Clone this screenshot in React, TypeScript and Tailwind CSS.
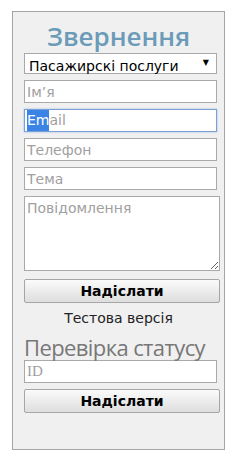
import { useState } from 'react';

const field =
  'block w-[193px] h-[23px] border border-[#a9a9a9] bg-white px-[2px] text-[14px] text-[#222] outline-none placeholder:text-[#a0a0a0]';

const button =
  'block h-[24px] w-[196px] rounded-[2px] border border-[#a6a6a6] bg-gradient-to-b from-[#fbfbfb] to-[#dedede] text-[14px] font-bold text-black';

export default function App() {
  const [topic, setTopic] = useState('Пасажирскі послуги');

  return (
    <div className="min-h-[460px] w-[241px] bg-white pt-[11px] pl-[12px] font-['DejaVu_Sans',Verdana,sans-serif]">
      <div className="w-[213px] h-[439px] border border-[#a5a5a5] bg-[#f0f0f0] pl-[11px]">
        <h1 className="mt-[8px] h-[33px] text-center pr-[11px] font-['Open_Sans',sans-serif] text-[26px] leading-[33px] font-semibold text-[#6b9bb9]">
          Звернення
        </h1>

        <div className="relative h-[21px] w-[193px] border border-[#a9a9a9] bg-white">
          <select
            value={topic}
            onChange={(e) => setTopic(e.target.value)}
            className="h-full w-full appearance-none bg-transparent pl-[4px] text-[14px] leading-[19px] text-black outline-none"
          >
            <option>Пасажирскі послуги</option>
          </select>
          <span className="pointer-events-none absolute right-[7px] top-[4px] text-[8px] leading-[10px] text-black">▼</span>
        </div>

        <input className={field + ' mt-[6px]'} placeholder="Ім’я" />

        <div className="mt-[6px] flex h-[23px] w-[193px] items-center border border-[#7c9fd6] bg-white px-[2px] text-[14px] shadow-[0_0_2px_#9bb8e6]">
          <span className="bg-[#3a84e6] text-white">Em</span>
          <span className="text-[#a0a0a0]">ail</span>
        </div>

        <input className={field + ' mt-[6px]'} placeholder="Телефон" />
        <input className={field + ' mt-[6px]'} placeholder="Тема" />

        <textarea
          className="mt-[6px] block h-[75px] w-[196px] border border-[#a9a9a9] bg-white px-[2px] py-[1px] text-[14px] outline-none placeholder:text-[#a0a0a0]"
          placeholder="Повідомлення"
        />

        <button className={button + ' mt-[8px]'}>Надіслати</button>

        <p className="mt-[6px] pr-[11px] text-center text-[14px] leading-[18px] text-[#222]">Тестова версія</p>

        <h2 className="mt-[8px] h-[24px] font-['Open_Sans',sans-serif] text-[22px] leading-[24px] text-[#777] tracking-[-0.6px]">
          Перевірка статусу
        </h2>

        <input
          className="mt-[1px] block h-[23px] w-[193px] border border-[#a9a9a9] bg-white px-[2px] font-['Liberation_Serif',serif] text-[15px] outline-none placeholder:text-[#a0a0a0]"
          placeholder="ID"
        />

        <button className={button + ' mt-[6px]'}>Надіслати</button>
      </div>
    </div>
  );
}
